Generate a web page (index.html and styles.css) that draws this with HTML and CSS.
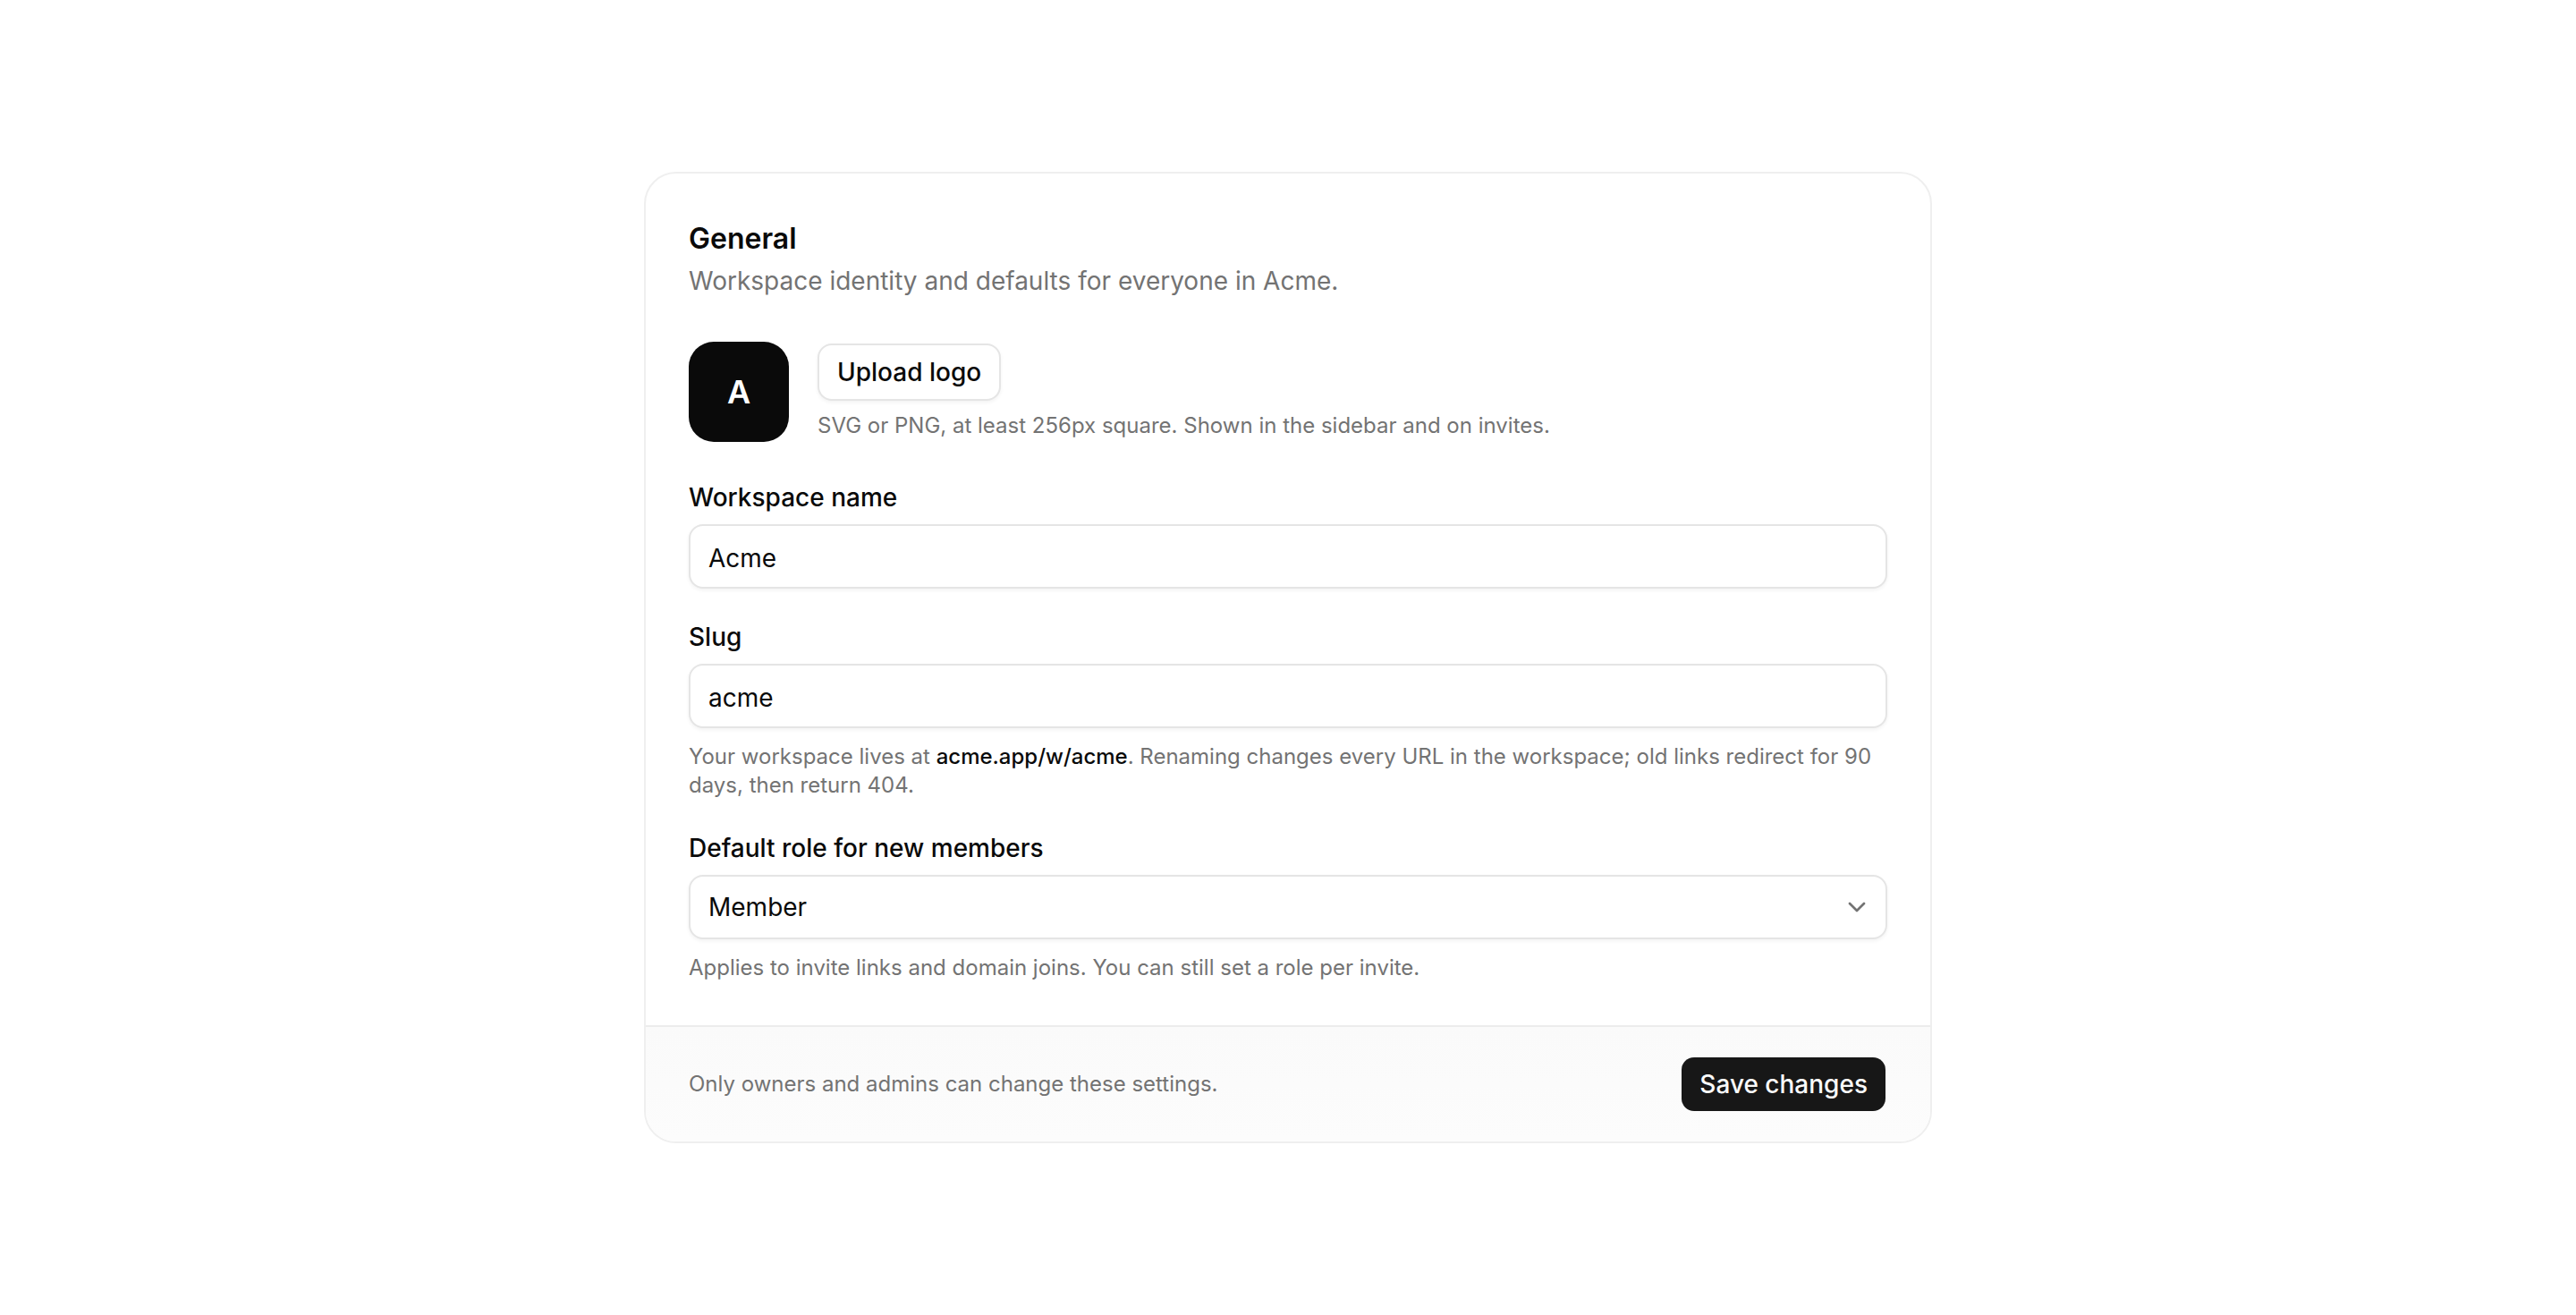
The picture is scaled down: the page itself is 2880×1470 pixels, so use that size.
FILE: index.html
```html
<!DOCTYPE html>
<html lang="en">
<head>
  <meta charset="utf-8">
  <meta name="viewport" content="width=device-width, initial-scale=1">
  <title>General settings</title>
  <link rel="stylesheet" href="styles.css">
</head>
<body class="page">
  <form class="card">
    <div class="card-body">
      <header class="card-header">
        <h1 class="card-title">General</h1>
        <p class="card-description">Workspace identity and defaults for everyone in Acme.</p>
      </header>
      <div class="logo-row">
        <div class="avatar">A</div>
        <div class="logo-actions">
          <button class="button button-outline" type="button">Upload logo</button>
          <p class="hint">SVG or PNG, at least 256px square. Shown in the sidebar and on invites.</p>
        </div>
      </div>
      <div class="fields">
        <div class="field">
          <label class="label" for="workspace-name">Workspace name</label>
          <input class="control" id="workspace-name" type="text" value="Acme">
        </div>
        <div class="field">
          <label class="label" for="slug">Slug</label>
          <input class="control" id="slug" type="text" value="acme" aria-describedby="slug-hint">
          <p class="hint" id="slug-hint">Your workspace lives at <strong class="hint-strong">acme.app/w/acme</strong>. Renaming changes every URL in the workspace; old links redirect for 90 days, then return 404.</p>
        </div>
        <div class="field">
          <label class="label" for="role">Default role for new members</label>
          <div class="select">
            <select class="control select-control" id="role" aria-describedby="role-hint">
              <option selected>Member</option>
            </select>
            <svg class="select-icon" viewBox="0 0 24 24" aria-hidden="true"><path d="m6 9 6 6 6-6"/></svg>
          </div>
          <p class="hint" id="role-hint">Applies to invite links and domain joins. You can still set a role per invite.</p>
        </div>
      </div>
    </div>
    <footer class="card-footer">
      <p class="hint">Only owners and admins can change these settings.</p>
      <button class="button button-primary" type="submit">Save changes</button>
    </footer>
  </form>
</body>
</html>
```
FILE: styles.css
```css
*,
*::before,
*::after {
  box-sizing: border-box;
}

.page {
  display: flex;
  align-items: center;
  justify-content: center;
  min-height: 100vh;
  margin: 0;
  padding: 48px;
  background: #ffffff;
  color: #0a0a0a;
  font-family: Inter, "Liberation Sans", sans-serif;
  font-size: 28px;
  line-height: 40px;
}

.card {
  width: 100%;
  max-width: 1440px;
  overflow: hidden;
  border: 2px solid #efefef;
  border-radius: 36px;
  background: #ffffff;
}

.card-body {
  display: flex;
  flex-direction: column;
  gap: 48px;
  padding: 48px;
}

.card-header {
  display: flex;
  flex-direction: column;
  gap: 2px;
}

.card-title {
  margin: 0;
  font-size: 32px;
  font-weight: 600;
  line-height: 50px;
}

.card-description {
  margin: 0;
  color: #737373;
}

.logo-row {
  display: flex;
  align-items: center;
  gap: 32px;
}

.avatar {
  display: flex;
  flex-shrink: 0;
  align-items: center;
  justify-content: center;
  width: 112px;
  height: 112px;
  border-radius: 28px;
  background: #0a0a0a;
  color: #ffffff;
  font-size: 36px;
  font-weight: 600;
}

.logo-actions {
  display: flex;
  flex-direction: column;
  align-items: flex-start;
  gap: 12px;
}

.hint {
  margin: 0;
  color: #737373;
  font-size: 24px;
  line-height: 32px;
}

.hint-strong {
  color: #0a0a0a;
  font-weight: 500;
}

.fields {
  display: flex;
  flex-direction: column;
  gap: 40px;
}

.field {
  display: flex;
  flex-direction: column;
  gap: 16px;
}

.label {
  font-weight: 500;
  line-height: 28px;
}

.control {
  width: 100%;
  height: 72px;
  margin: 0;
  padding: 4px 20px 0;
  border: 2px solid #e5e5e5;
  border-radius: 16px;
  background: #ffffff;
  box-shadow: 0 2px 4px rgb(0 0 0 / 5%);
  color: inherit;
  font: inherit;
}

.select {
  display: grid;
  align-items: center;
}

.select > * {
  grid-area: 1 / 1;
}

.select-control {
  padding: 0 64px 0 20px;
  appearance: none;
}

.select-icon {
  justify-self: end;
  width: 32px;
  height: 32px;
  margin-right: 18px;
  fill: none;
  stroke: #737373;
  stroke-linecap: round;
  stroke-linejoin: round;
  stroke-width: 2;
  pointer-events: none;
}

.card-footer {
  display: flex;
  align-items: center;
  justify-content: space-between;
  gap: 32px;
  padding: 32px 48px;
  border-top: 2px solid #ececec;
  background: linear-gradient(#fafafa, #fcfcfc);
}

.button {
  height: 64px;
  padding: 0 20px;
  border: 2px solid transparent;
  border-radius: 16px;
  background-clip: padding-box;
  font: inherit;
  font-weight: 500;
  white-space: nowrap;
}

.button-outline {
  border-color: #e5e5e5;
  background-color: #ffffff;
  box-shadow: 0 2px 4px rgb(0 0 0 / 5%);
  color: #0a0a0a;
}

.button-primary {
  background-color: #171717;
  color: #fafafa;
}
```
